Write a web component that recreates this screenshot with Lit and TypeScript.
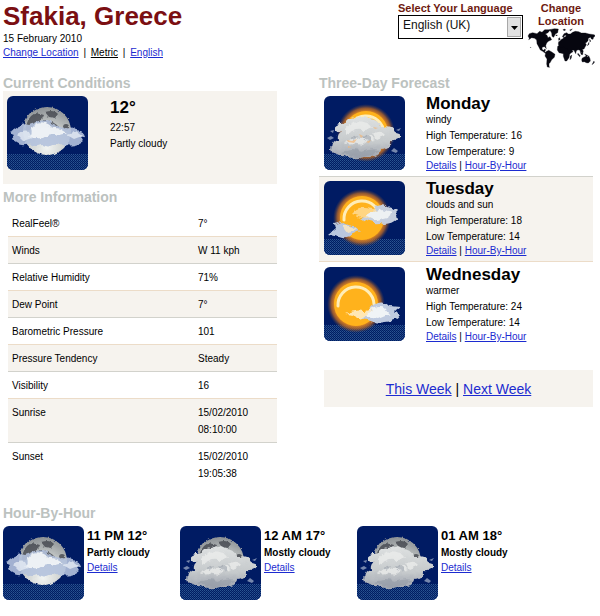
import { LitElement, html, svg, css } from "lit";
import { customElement, property } from "lit/decorators.js";

type Sky = "moon-partly" | "moon-mostly" | "sun-mostly" | "sun-partly" | "sun-wisp";

const moon = svg`
  <g filter="url(#crater)">
    <circle cx="40" cy="35" r="24" fill="url(#moonFill)"></circle>
    <g fill="#3d4048" opacity=".75">
      <path d="M20 27q3-9 10-10l7 2-3 7-6 2-5 6-5 1z"></path>
      <path d="M38 16q9-3 13 2l-3 4-6-1z"></path>
      <path d="M36 24l8 1 6 4 5 7-7 1-7-5-6-1z"></path>
      <circle cx="59" cy="31" r="3"></circle>
      <path d="M28 29l6-1 1 4-5 2z"></path>
    </g>
  </g>`;

const sun = (cx: number) => svg`
  <circle cx=${cx} cy="37" r="29" fill="url(#glow)"></circle>
  <circle cx=${cx} cy="37" r="22" fill="#ffb21c"></circle>
  <path d="M${cx - 18} 39a18 18 0 0 1 36-2" fill="none" stroke="#ffedb8" stroke-width="3" stroke-linecap="round"></path>`;

const bank = svg`
  <g filter="url(#fluff)">
    <path fill="url(#greyCloud)" d="M7 53q0-8 7-9-1-5 4-8-9 1-8-4 3-5 10-4 4-8 13-6 6-5 13 1 9 0 11 7 11-1 14 6 6 1 5 4-2 5-10 4 1 9-9 9-3 9-15 8-13 3-22-1-12 1-13-7z"></path>
    <path fill="#eceeec" opacity=".75" d="M22 33q7-10 17-7 8 1 10 7-6-2-9 2-9-4-18 4zM20 48q8-9 16-5 8-5 15 0-9 0-13 6-8-3-18-1zM48 38q9-5 14 1l-9 4z"></path>
    <path fill="#8e95a2" opacity=".5" d="M18 56q10-4 20 0 9-4 18-2-9 7-20 7-10 0-18-5zM38 39q6 1 9 5-6 1-9-5zM26 42l8-3-4 6z"></path>
  </g>
  <g fill="#93a3bf" opacity=".8">
    <path d="M3 42l4-2 3 2-4 2zM67 55l3-3 4 3-2 2zM72 34l5-2-2 3zM6 35l4-1-1 3z"></path>
  </g>`;

const scenes: Record<Sky, unknown> = {
  "moon-partly": svg`
    ${moon}
    <g filter="url(#fluff)">
      <path fill="#b4c2dd" opacity=".9" d="M4 43l4-5-5-2 7-5q6-4 12-2l6-2 5-3q8-2 12 4l10 4q7-3 13 2 9 0 10 6l-5 1 3 4q-7 6-15 4-7 1-10-3-8 7-16 3-7 3-13-1-9 4-18-5z"></path>
      <path fill="#f3f6f7" opacity=".9" d="M24 32q8-9 17-4 5 4 12 5l8 5q-8-1-12 3-7-4-13 1-7 1-14-1 4-3 2-9z"></path>
      <path fill="#e4eaf2" opacity=".8" d="M10 39q6-5 12-3l3 6-9 3zM60 39l10-3 5 4-8 3z"></path>
    </g>`,
  "moon-mostly": svg`${moon}${bank}`,
  "sun-mostly": svg`
    ${sun(42)}${bank}
    <g fill="#f3b575" opacity=".7">
      <path d="M23 44l5 1 5-2-3 4-6-1zM35 38l4 2-2 2zM42 46l5-2-2 3zM24 50l4 1-4 1zM49 31l5 1-3 1z"></path>
    </g>`,
  "sun-partly": svg`
    ${sun(38)}
    <g filter="url(#fluff)">
      <path fill="#c5cedd" d="M47 34l5-9q7-4 12 1l6 2 5 2-3 3 1 5q-8 7-17 4-12 1-20-5z"></path>
      <path fill="#ffe0a4" opacity=".75" d="M27 33q7-8 14-6l10 1 8 6q-9 0-13 4-10-2-19-5z"></path>
      <path fill="#edf1f3" d="M42 35q8-5 16-7l9 3-3 6-12 3z"></path>
      <path fill="#b9c7df" d="M5 53l6-5-1-5 8-2q5 4 12 4l6 5-7 3q-7 5-13 2z"></path>
      <path fill="#ffe9bd" opacity=".8" d="M18 45q9-1 16 4l-11 3z"></path>
    </g>`,
  "sun-wisp": svg`
    ${sun(32)}
    <g filter="url(#fluff)">
      <path fill="#bfcbe0" d="M42 48q3-9 11-12 8-2 12 3l11 1-5 4 4 4q-4 7-14 7-9 2-17-2l-9-1z"></path>
      <path fill="#fff0cf" opacity=".85" d="M21 47q10-5 20-3l14-4 7 6-12 4-9-1-6 4-5-5z"></path>
      <path fill="#f0f4f6" d="M46 44q8-6 15-3l5 6-12 5-11-2z"></path>
    </g>`,
};

@customElement("weather-icon")
export class WeatherIcon extends LitElement {
  @property() sky: Sky = "moon-partly";
  @property() label = "";

  static styles = css`
    :host {
      display: block;
      flex: none;
      line-height: 0;
    }
    .tile {
      width: 81px;
      height: 74px;
      border-radius: 6px;
    }
  `;

  render() {
    return html`
      <svg class="tile" viewBox="0 0 81 74" role="img" aria-label=${this.label}>
        <defs>
          <pattern id="dots" width="2" height="2" patternUnits="userSpaceOnUse">
            <rect width="2" height="2" fill="#001b63"></rect>
            <rect width="1" height="1" fill="#2a5590"></rect>
            <rect x="1" y="1" width="1" height="1" fill="#1c4480"></rect>
          </pattern>
          <radialGradient id="moonFill" cx=".5" cy=".85" r=".9">
            <stop offset="0" stop-color="#f2f4f2"></stop>
            <stop offset=".55" stop-color="#c3c7c6"></stop>
            <stop offset="1" stop-color="#84898d"></stop>
          </radialGradient>
          <radialGradient id="glow">
            <stop offset=".7" stop-color="#ff9a1a"></stop>
            <stop offset=".86" stop-color="#b06428" stop-opacity=".8"></stop>
            <stop offset="1" stop-color="#5a4040" stop-opacity="0"></stop>
          </radialGradient>
          <linearGradient id="greyCloud" x2="0" y2="1">
            <stop offset="0" stop-color="#dfe2e2"></stop>
            <stop offset=".6" stop-color="#c6cacc"></stop>
            <stop offset="1" stop-color="#a0a5b0"></stop>
          </linearGradient>
          <filter id="fluff" x="-10%" y="-10%" width="120%" height="120%" color-interpolation-filters="sRGB">
            <feTurbulence type="fractalNoise" baseFrequency=".14" numOctaves="2" seed="4" result="n"></feTurbulence>
            <feDisplacementMap in="SourceGraphic" in2="n" scale="6" xChannelSelector="R" yChannelSelector="G" result="d"></feDisplacementMap>
            <feGaussianBlur in="d" stdDeviation=".5"></feGaussianBlur>
          </filter>
          <filter id="crater" color-interpolation-filters="sRGB">
            <feTurbulence type="fractalNoise" baseFrequency=".3" numOctaves="2" seed="9" result="n"></feTurbulence>
            <feDisplacementMap in="SourceGraphic" in2="n" scale="3" xChannelSelector="R" yChannelSelector="G"></feDisplacementMap>
          </filter>
        </defs>
        <rect width="81" height="74" fill="#001b63"></rect>
        <rect y="58" width="81" height="16" fill="url(#dots)"></rect>
        ${scenes[this.sky]}
      </svg>
    `;
  }
}

const readings = [
  ["RealFeel®", "7°"],
  ["Winds", "W 11 kph"],
  ["Relative Humidity", "71%"],
  ["Dew Point", "7°"],
  ["Barometric Pressure", "101"],
  ["Pressure Tendency", "Steady"],
  ["Visibility", "16"],
  ["Sunrise", "15/02/2010 08:10:00"],
  ["Sunset", "15/02/2010 19:05:38"],
];

const days: { name: string; note: string; high: number; low: number; sky: Sky }[] = [
  { name: "Monday", note: "windy", high: 16, low: 9, sky: "sun-mostly" },
  { name: "Tuesday", note: "clouds and sun", high: 18, low: 14, sky: "sun-partly" },
  { name: "Wednesday", note: "warmer", high: 24, low: 14, sky: "sun-wisp" },
];

const hours: { time: string; note: string; sky: Sky }[] = [
  { time: "11 PM 12°", note: "Partly cloudy", sky: "moon-partly" },
  { time: "12 AM 17°", note: "Mostly cloudy", sky: "moon-mostly" },
  { time: "01 AM 18°", note: "Mostly cloudy", sky: "moon-mostly" },
];

@customElement("app-root")
export class AppRoot extends LitElement {
  static styles = css`
    :host {
      display: block;
      padding: 0 7px 16px 3px;
      background: #fff;
      color: #000;
      font: 10px/16px "Liberation Sans", Arial, sans-serif;
    }
    h1, h2, h3, p { margin: 0; }
    a { color: #1c2bd0; }
    .top {
      display: flex;
      justify-content: space-between;
      align-items: flex-start;
      min-height: 75px;
    }
    .place {
      font-size: 26px;
      line-height: 32px;
      color: #7b0f12;
    }
    .date { line-height: 14px; }
    .units { line-height: 13px; }
    .units a { margin-right: 2px; }
    .units a + a { margin-left: 2px; }
    .units .active { color: #000; }
    .tools {
      display: flex;
      gap: 4px;
      margin-right: -2px;
      font-size: 11px;
      font-weight: bold;
      line-height: 13px;
      color: #6e1a10;
    }
    .language {
      display: block;
      padding-top: 2px;
      width: 125px;
      white-space: nowrap;
    }
    .picker {
      display: grid;
      grid-template-columns: 1fr 16px;
      border: 1px solid #000;
      height: 22px;
    }
    .picker select {
      grid-area: 1 / 1 / 2 / 3;
      appearance: none;
      border: 0;
      padding: 0 20px 4px 4px;
      background: #fff;
      color: #111;
      font: 12px/16px "Liberation Sans", Arial, sans-serif;
    }
    .arrow {
      grid-area: 1 / 2;
      margin: 1px;
      background: #e2e2e2;
      border: 1px solid #a8a8a8;
      pointer-events: none;
      z-index: 1;
    }
    .arrow svg { display: block; width: 12px; height: 18px; }
    .relocate {
      display: block;
      padding-top: 2px;
      width: 68px;
      color: inherit;
      text-align: center;
      text-decoration: none;
    }
    .relocate svg {
      display: block;
      width: 68px;
      height: 40px;
    }
    .columns {
      display: grid;
      grid-template-columns: 1fr 1fr;
      gap: 42px;
    }
    .title {
      font-size: 14px;
      line-height: 16px;
      color: #bcc2bf;
    }
    .now {
      display: flex;
      gap: 22px;
      padding: 5px 4px 14px;
      margin-bottom: 5px;
      background: #f6f3ee;
    }
    .big {
      font-size: 17px;
      line-height: 24px;
    }
    .facts {
      width: calc(100% - 5px);
      margin: 5px 0 0 5px;
      border-collapse: collapse;
      table-layout: fixed;
    }
    .facts th, .facts td {
      padding: 6px 4px 4px;
      font-weight: normal;
      text-align: left;
      vertical-align: top;
    }
    .facts td { padding-right: 20px; }
    .facts th { width: 178px; }
    .facts tr { border-bottom: 1px solid #d2d2cc; }
    .facts tr:nth-child(odd) { border-bottom: 1px solid #ecdcc8; }
    .facts tr:nth-child(even) { background: #f6f3ee; }
    .facts tr:last-child { border: 0; }
    .facts .long > * {
      padding-top: 5px;
      line-height: 17px;
    }
    .day {
      display: flex;
      gap: 21px;
      padding: 5px 5px 4px;
    }
    .day:nth-child(odd) {
      background: #f6f3ee;
      border-top: 1px solid #d2d2cc;
      border-bottom: 1px solid #ecdcc8;
      padding-top: 4px;
    }
    .day .big { line-height: 16px; }
    .day .links { line-height: 12px; }
    .weeks {
      margin: 23px 0 0 5px;
      background: #f6f3ee;
      font-size: 14px;
      line-height: 35px;
      padding-top: 2px;
      text-align: center;
    }
    .hourly { margin-top: 19px; }
    .strip { display: flex; }
    .hour {
      display: flex;
      gap: 3px;
      width: 30%;
      padding-top: 5px;
      line-height: 14px;
    }
    .hour .time {
      font-size: 13px;
      line-height: 19px;
    }
    .hour .note {
      font-weight: bold;
      line-height: 16px;
    }
  `;

  render() {
    return html`
      <header class="top">
        <div>
          <h1 class="place">Sfakia, Greece</h1>
          <p class="date">15 February 2010</p>
          <nav class="units">
            <a href="#location">Change Location</a> |
            <a class="active" href="#metric">Metric</a> |
            <a href="#english">English</a>
          </nav>
        </div>
        <div class="tools">
          <label class="language">
            Select Your Language
            <span class="picker">
              <select><option>English (UK)</option></select>
              <span class="arrow">
                <svg viewBox="0 0 12 18"><path d="M3 8h7l-3.500 4z" fill="#000"></path></svg>
              </span>
            </span>
          </label>
          <a class="relocate" href="#location">
            Change Location
            <svg viewBox="22 28 204 120" aria-hidden="true">
              <g fill="#06060f" stroke="#06060f" stroke-width="1" stroke-linejoin="round">
                <path d="M25 52l4-7 10-3 13 3 8-7 7 3 8-8 17 0-7 9-8 4 5 4 3 7 6-3 5 9-10 5-5 5-3 8 2 9-5-6-7 1-1 7 5 3 3-4 3 2-3 6 6 4-4 1-8-6-7-4-5-10-5-9-1-11-6-5-9-2-9 6 2-4z"></path>
                <path d="M90 33l14-3 12 1-2 11-7 4-5 10-5-3-1-10z"></path>
                <path d="M79 99l8-4 8 4 11 8-2 9-8 7-4 8-4 4 0 8 2 3-7-1-2-9 1-15-6-9z"></path>
                <path d="M114 83l14-4 6 4 12-1 4 12 7 2-7 11-2 10-7 10-5 0-5-14 0-8-13-3-5-8z"></path>
                <path d="M152 113l4-4-1 9-4 5z"></path>
                <path d="M116 76l1-7 5-2 1-4 7-3 2-4 5-1 3-5-4 0-5 6-3-2 5-9 8-3 5 4 6 0 7-5 8-3 10 1 8 4 12 0 11 3 15 2 5 4-6 3-2 7-5-1-2-5-7 3-1 7-4 5-4 2 3 5-4 7-3 6-5 1 3 6-3 4-3-3 1 8-3-4-2-8-6-2-5 3-2 9-5-10-6-1 3 5-8 5-6-7-3-7-6-1-2-4-5-1-3 3-4-2-4 4z"></path>
                <path d="M186 124l2-6 8-4 4-3 4 4 3-4 4 9 1 7-6 6-6-1-6-3-6 1z"></path>
                <path d="M175 104l7 8-2 2-6-7zM184 103l6-3-1 8-5-1zM195 106l10 5-5 1zM117 59l3-2 1 6-4 2zM108 49l5 0-2 3zM130 33l5-2 3 3-5 2zM150 34l8-3-5 5zM210 62l3 5-2 3zM208 71l0 6-5 4zM223 127l1 5-7 6zM32 86l2 1-1 1z"></path>
              </g>
            </svg>
          </a>
        </div>
      </header>

      <main>
        <div class="columns">
          <section>
            <h2 class="title">Current Conditions</h2>
            <div class="now">
              <weather-icon sky="moon-partly" label="Partly cloudy"></weather-icon>
              <div>
                <h3 class="big">12°</h3>
                <p>22:57</p>
                <p>Partly cloudy</p>
              </div>
            </div>
            <h2 class="title">More Information</h2>
            <table class="facts">
              <tbody>
                ${readings.map(
                  ([name, value]) => html`
                    <tr class=${value.length > 12 ? "long" : ""}>
                      <th scope="row">${name}</th>
                      <td>${value}</td>
                    </tr>
                  `
                )}
              </tbody>
            </table>
          </section>

          <section>
            <h2 class="title">Three-Day Forecast</h2>
            ${days.map(
              (d) => html`
                <article class="day">
                  <weather-icon sky=${d.sky} label=${d.note}></weather-icon>
                  <div>
                    <h3 class="big">${d.name}</h3>
                    <p>${d.note}</p>
                    <p>High Temperature: ${d.high}</p>
                    <p>Low Temperature: ${d.low}</p>
                    <p class="links"><a href="#details">Details</a> | <a href="#hourly">Hour-By-Hour</a></p>
                  </div>
                </article>
              `
            )}
            <nav class="weeks"><a href="#this-week">This Week</a> | <a href="#next-week">Next Week</a></nav>
          </section>
        </div>

        <section class="hourly">
          <h2 class="title">Hour-By-Hour</h2>
          <div class="strip">
            ${hours.map(
              (h) => html`
                <article class="hour">
                  <weather-icon sky=${h.sky} label=${h.note}></weather-icon>
                  <div>
                    <h3 class="time">${h.time}</h3>
                    <p class="note">${h.note}</p>
                    <a href="#details">Details</a>
                  </div>
                </article>
              `
            )}
          </div>
        </section>
      </main>
    `;
  }
}
